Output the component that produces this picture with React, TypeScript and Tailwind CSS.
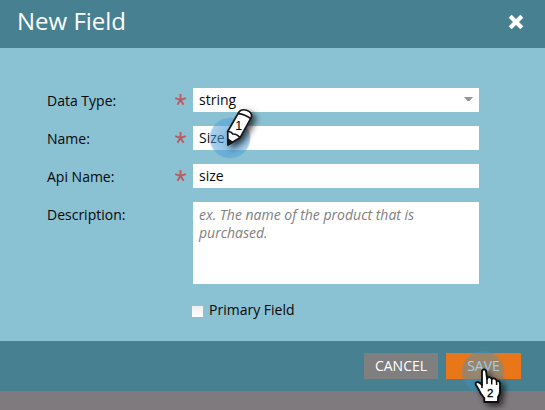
import React from "react";

function Row({ label, required, children }: { label: string; required?: boolean; children: React.ReactNode }) {
  return (
    <div className="flex items-start">
      <div className="w-[126px] pt-[3px] leading-5">{label}</div>
      <div className="flex h-6 w-5 items-center">
        {required && (
          <svg width="14" height="14" viewBox="0 0 14 14" className="ml-[1px]" stroke="#bf5a5c" strokeWidth="1.9" fill="none">
            <path d="M6.5 1V7M1.2 5.2L6.5 7L11.8 5.2M3.4 11.8L6.5 7L9.6 11.8" />
          </svg>
        )}
      </div>
      {children}
    </div>
  );
}

function Pencil() {
  return (
    <svg className="absolute left-[200px] top-[100px]" width="72" height="64" viewBox="200 100 72 64">
      <defs>
        <filter id="pencilShadow" x="-50%" y="-50%" width="200%" height="200%">
          <feDropShadow dx="3.5" dy="3" stdDeviation="3" floodColor="#000" floodOpacity="0.7" />
        </filter>
        <radialGradient id="pencilGlow">
          <stop offset="0" stopColor="#4b9bd4" stopOpacity="0.68" />
          <stop offset="0.65" stopColor="#4b9dd8" stopOpacity="0.55" />
          <stop offset="0.92" stopColor="#4b9dd8" stopOpacity="0.48" />
          <stop offset="1" stopColor="#4b9dd8" stopOpacity="0" />
        </radialGradient>
      </defs>
      <circle cx="230" cy="138" r="21" fill="url(#pencilGlow)" />
      <g filter="url(#pencilShadow)" stroke="#151515" strokeWidth="1.7" strokeLinejoin="round">
        <path d="M227.7 131.5L238.6 112.6Q241 108.6 246.5 110.2Q252.8 112.4 251.3 117.4L240 137.8L228 144.8Z" fill="#fff" />
        <path d="M238.2 113.6Q245 114.2 250.8 118.7M227.7 131.5Q231.2 131.3 232.8 134Q237.2 134 240 137.8" fill="none" />
        <path d="M227.8 139.3L232.5 142.2L228 144.8Z" fill="#151515" />
      </g>
      <text x="238.7" y="130.2" textAnchor="middle" fontSize="12.5" fontFamily="Liberation Sans, sans-serif" fill="#000">1</text>
    </svg>
  );
}

function Hand() {
  return (
    <svg className="absolute left-[450px] top-[342px]" width="72" height="68" viewBox="450 342 72 68">
      <defs>
        <filter id="handShadow" x="-50%" y="-50%" width="200%" height="200%">
          <feDropShadow dx="3.5" dy="3" stdDeviation="3" floodColor="#000" floodOpacity="0.7" />
        </filter>
        <radialGradient id="handGlow">
          <stop offset="0" stopColor="#4b9cc9" stopOpacity="0.54" />
          <stop offset="0.65" stopColor="#3f92c6" stopOpacity="0.47" />
          <stop offset="0.92" stopColor="#3f92c6" stopOpacity="0.42" />
          <stop offset="1" stopColor="#3f92c6" stopOpacity="0" />
        </radialGradient>
      </defs>
      <circle cx="483" cy="372" r="22" fill="url(#handGlow)" />
      <path
        filter="url(#handShadow)"
        d="M482 385V372Q482 369.3 484 369.3Q486 369.3 486.2 372L487 379Q488 376.7 490 377.3Q491.6 377.7 491.7 379.3Q493 377.7 495 378.8Q496.5 379.6 496.6 381Q499.6 380 500 384V391Q500 394.5 498 397V402H484.3V398Q480 393.5 478.8 389.6L475.7 384.5Q475.2 382 478 382.2Q480.3 382.8 482 385Z"
        fill="#fff"
        stroke="#080808"
        strokeWidth="1.8"
        strokeLinejoin="round"
      />
      <path d="M487 378V384M491.7 379V384.5M496.6 381V385M482 384V388" stroke="#080808" strokeWidth="1.5" fill="none" />
      <text x="490.2" y="397" textAnchor="middle" fontSize="11.5" fontFamily="Liberation Sans, sans-serif" fill="#000" stroke="#000" strokeWidth="0.3">2</text>
    </svg>
  );
}

export default function App() {
  return (
    <div className="relative flex h-[410px] w-[545px] flex-col overflow-hidden bg-[#7f7a7e] font-['Open_Sans','Noto_Sans',sans-serif] text-[14px] text-[#080808]">
      <header className="flex h-12 items-start justify-between bg-[#468091] pl-[17px] pr-[21px] text-white">
        <h1 className="pt-[5px] text-[24px] leading-8">New Field</h1>
        <svg width="16" height="16" viewBox="0 0 16 16" className="mt-[14px]" stroke="#fff" strokeWidth="4.2">
          <path d="M2.2 2.2L13.8 13.8M13.8 2.2L2.2 13.8" />
        </svg>
      </header>
      <main className="flex h-[293px] flex-col gap-[14px] bg-[#8ac1d3] pl-[47px] pt-10">
        <Row label="Data Type:" required>
          <div className="flex h-6 w-[286px] items-center justify-between bg-white pl-1.5 pr-[6px]">
            <span className="leading-6">string</span>
            <svg width="9" height="5" viewBox="0 0 9 5" className="mb-[2px]"><path d="M0 0H9L5.5 4H3.5Z" fill="#949494" /></svg>
          </div>
        </Row>
        <Row label="Name:" required>
          <div className="h-6 w-[286px] bg-white pl-1.5 leading-6">Size</div>
        </Row>
        <Row label="Api Name:" required>
          <div className="h-6 w-[286px] bg-white pl-1.5 leading-6">size</div>
        </Row>
        <Row label="Description:">
          <div className="h-[82px] w-[286px] bg-white px-1.5 pt-1 italic leading-[18px] text-[#808080]">
            ex. The name of the product that is<br />purchased.
          </div>
        </Row>
        <div className="ml-[144px] mt-[2px] flex h-5 items-center">
          <div className="mt-[3px] size-[13px] rounded-[1px] border border-[#a9b6bb] bg-gradient-to-b from-[#eeeeee] to-white" />
          <span className="ml-[5px] leading-5">Primary Field</span>
        </div>
      </main>
      <footer className="flex h-[50px] gap-2 bg-[#468091] pl-[364px] pt-3 text-center leading-[26px] text-white">
        <div className="h-[26px] w-[74px] bg-[#7f7f7f]">CANCEL</div>
        <div className="h-[26px] w-[75px] bg-[#e97618]">SAVE</div>
      </footer>
      <Pencil />
      <Hand />
    </div>
  );
}
